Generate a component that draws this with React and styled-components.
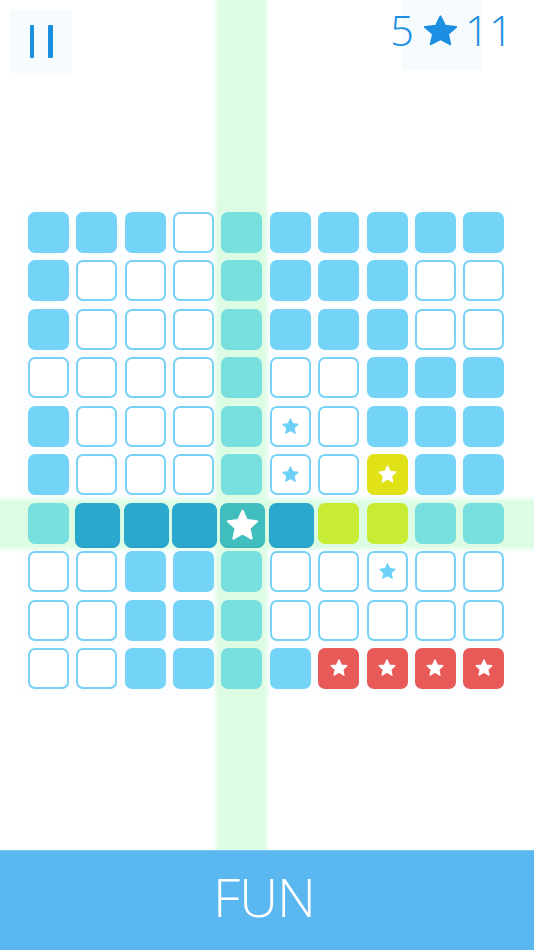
import React from "react";
import styled, { createGlobalStyle, css } from "styled-components";

const GlobalStyle = createGlobalStyle`
  html, body { margin: 0; padding: 0; background: #ffffff; }
  body { font-family: "Open Sans", "Noto Sans", sans-serif; }
  * { box-sizing: border-box; }
`;

const Screen = styled.div`
  position: relative;
  width: 534px;
  height: 950px;
  overflow: hidden;
  display: flex;
  flex-direction: column;
  background: #ffffff;
`;

const VerticalGlow = styled.div`
  position: absolute;
  left: 213px;
  top: 0;
  width: 57px;
  height: 850px;
  background: linear-gradient(
    to right,
    rgba(220, 253, 227, 0) 0px,
    #dcfde3 6px,
    #dcfde3 51px,
    rgba(220, 253, 227, 0) 57px
  );
  z-index: 1;
`;

const HorizontalGlow = styled.div`
  position: absolute;
  left: 0;
  top: 496px;
  width: 534px;
  height: 56px;
  background: linear-gradient(
    to bottom,
    rgba(220, 253, 227, 0) 0px,
    #dcfde3 6px,
    #dcfde3 50px,
    rgba(220, 253, 227, 0) 56px
  );
  z-index: 1;
`;

const Header = styled.div`
  position: relative;
  z-index: 2;
  height: 73px;
  display: flex;
  justify-content: space-between;
  align-items: flex-start;
`;

const PauseButton = styled.button`
  margin: 10px 0 0 10px;
  width: 62px;
  height: 63px;
  border: none;
  padding: 0;
  background: #f6fbfe;
  display: flex;
  justify-content: center;
  align-items: center;
  gap: 14px;
  cursor: pointer;
`;

const PauseBar = styled.span`
  display: block;
  width: 4.5px;
  height: 33px;
  background: #1a8fe0;
  border-radius: 1px;
`;

const Score = styled.div`
  position: relative;
  margin-right: 21px;
  margin-top: 0;
  display: flex;
  align-items: flex-start;
  color: #1b8fe1;
  font-size: 42px;
  font-weight: 300;
  line-height: 60px;

  &::before {
    content: "";
    position: absolute;
    right: 31px;
    top: 0;
    width: 80px;
    height: 70px;
    background: #f6fbfe;
    z-index: -1;
  }
`;

const ScoreNum = styled.span`
  display: block;
`;

const ScoreStar = styled.svg`
  width: 39px;
  height: 36.5px;
  margin: 12.7px 5px 0 7px;
  display: block;
`;

const Board = styled.div`
  margin: 133px 0 0 22px;
  width: 489px;
  padding: 6px;
  background: #fbfdff;
  display: grid;
  grid-template-columns: repeat(10, 41px);
  grid-auto-rows: 41px;
  column-gap: 7.37px;
  row-gap: 7.44px;
`;

const palette = {
  B: "#74d4f8",
  T: "#77dfde",
  D: "#2aa8cd",
  S: "#40bdbe",
  L: "#c8eb34",
  Y: "#e0e116",
  R: "#e85a57",
};

const Cell = styled.div`
  position: relative;
  z-index: 2;
  width: 41px;
  height: 41px;
  border-radius: 7px;
  display: flex;
  justify-content: center;
  align-items: center;
  ${({ $kind }) =>
    $kind === "E"
      ? css`
          background: #ffffff;
          border: 2.5px solid #78d2f6;
        `
      : css`
          background: ${palette[$kind]};
        `}
  ${({ $big }) =>
    $big &&
    css`
      transform: scale(1.1);
      transform-origin: 25% 0%;
      box-shadow: inset 0 -1.5px 0 rgba(0, 60, 90, 0.08);
    `}
`;

const StarIcon = styled.svg`
  display: block;
  width: ${({ $size }) => $size}px;
  height: ${({ $size }) => $size}px;
`;

const STAR =
  "12,2.2 14.9,8.4 21.6,9.2 16.6,13.8 18,20.6 12,17.2 6,20.6 7.4,13.8 2.4,9.2 9.1,8.4";

function Star({ size, color }) {
  return (
    <StarIcon $size={size} viewBox="0 0 24 24">
      <polygon
        points={STAR}
        fill={color}
        stroke={color}
        strokeWidth="1.4"
        strokeLinejoin="round"
      />
    </StarIcon>
  );
}

const BottomBar = styled.div`
  position: relative;
  z-index: 2;
  margin-top: auto;
  height: 100px;
  background: #5ab7f0;
  border-top: 1px solid #7cc8f3;
  color: #ffffff;
  font-size: 54px;
  font-weight: 300;
  line-height: 90px;
  text-align: center;
  padding-right: 6px;
  letter-spacing: -1px;
`;

// B filled blue, E empty, e empty + blue star, T teal, D dark, S dark-teal + star,
// L lime, Y yellow + star, R red + star
const ROWS = [
  "BBBETBBBBB",
  "BEEETBBBEE",
  "BEEETBBBEE",
  "EEEETEEBBB",
  "BEEETeEBBB",
  "BEEETeEYBB",
  "TDDDSDLLTT",
  "EEBBTEEeEE",
  "EEBBTEEEEE",
  "EEBBTBRRRR",
];

function renderCell(ch, key) {
  if (ch === "e") {
    return (
      <Cell key={key} $kind="E">
        <Star size={19} color="#6dd0f7" />
      </Cell>
    );
  }
  if (ch === "S") {
    return (
      <Cell key={key} $kind="S" $big>
        <Star size={33} color="#ffffff" />
      </Cell>
    );
  }
  if (ch === "Y") {
    return (
      <Cell key={key} $kind="Y">
        <Star size={21} color="#ffffff" />
      </Cell>
    );
  }
  if (ch === "R") {
    return (
      <Cell key={key} $kind="R">
        <Star size={20} color="#ffffff" />
      </Cell>
    );
  }
  return <Cell key={key} $kind={ch} $big={ch === "D"} />;
}

export default function App() {
  return (
    <>
      <GlobalStyle />
      <Screen>
        <VerticalGlow />
        <HorizontalGlow />
        <Header>
          <PauseButton aria-label="Pause">
            <PauseBar />
            <PauseBar />
          </PauseButton>
          <Score>
            <ScoreNum>5</ScoreNum>
            <ScoreStar viewBox="0 0 24 24" preserveAspectRatio="none">
              <polygon
                points={STAR}
                fill="#1b8fe1"
                stroke="#1b8fe1"
                strokeWidth="1.2"
                strokeLinejoin="round"
              />
            </ScoreStar>
            <ScoreNum>11</ScoreNum>
          </Score>
        </Header>
        <Board>
          {ROWS.map((row, r) =>
            row.split("").map((ch, c) => renderCell(ch, `${r}-${c}`))
          )}
        </Board>
        <BottomBar>FUN</BottomBar>
      </Screen>
    </>
  );
}
